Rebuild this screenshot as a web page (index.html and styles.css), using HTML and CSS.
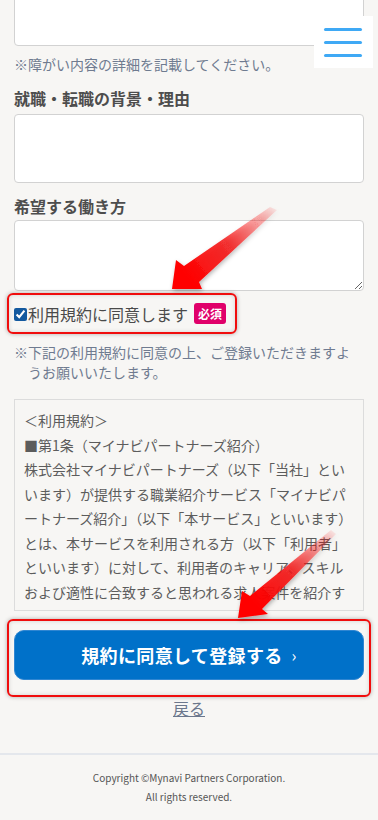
FILE: index.html
```html
<!DOCTYPE html>
<html lang="ja">
<head>
    <meta charset="UTF-8">
    <meta name="viewport" content="width=device-width, initial-scale=1.0">
    <title>エントリーフォーム</title>
    <link rel="stylesheet" href="styles.css">
</head>
<body>
<button type="button" class="menu-button" aria-label="メニュー">
    <span></span><span></span><span></span>
</button>

<main class="form">
    <div class="field field-cut">
        <textarea class="input input-cut"></textarea>
        <p class="note">※障がい内容の詳細を記載してください。</p>
    </div>

    <div class="field">
        <h3 class="field-title">就職・転職の背景・理由</h3>
        <textarea class="input input-reason"></textarea>
    </div>

    <div class="field">
        <h3 class="field-title field-title-tight">希望する働き方</h3>
        <textarea class="input input-style"></textarea>
    </div>

    <label class="agree mark">
        <input type="checkbox" checked>
        <span class="agree-text">利用規約に同意します</span>
        <span class="badge">必須</span>
    </label>

    <p class="note note-hang">※下記の利用規約に同意の上、ご登録いただきますようお願いいたします。</p>

    <div class="terms">
        <p>＜利用規約＞</p>
        <p>■第1条（マイナビパートナーズ紹介）</p>
        <p>株式会社マイナビパートナーズ（以下「当社」といいます）が提供する職業紹介サービス「マイナビパートナーズ紹介」（以下「本サービス」といいます）とは、本サービスを利用される方（以下「利用者」といいます）に対して、利用者のキャリア、スキルおよび適性に合致すると思われる求人案件を紹介するサービスをいいます。</p>
    </div>

    <div class="submit-wrap mark">
        <button type="submit" class="submit">規約に同意して登録する<span class="chevron">&rsaquo;</span></button>
    </div>

    <p class="back-row"><a href="#" class="back">戻る</a></p>
</main>

<footer class="footer">
    <p>Copyright ©Mynavi Partners Corporation.</p>
    <p>All rights reserved.</p>
</footer>

<!-- annotation arrows drawn over the page -->
<svg class="arrows" width="378" height="820" viewBox="0 0 378 820" aria-hidden="true">
    <defs>
        <linearGradient id="arrow1" gradientUnits="userSpaceOnUse" x1="274" y1="208" x2="186" y2="276">
            <stop offset="0" stop-color="#ff1010" stop-opacity="0.08"/>
            <stop offset="0.55" stop-color="#f41414" stop-opacity="0.85"/>
            <stop offset="1" stop-color="#ff0000"/>
        </linearGradient>
        <linearGradient id="arrow2" gradientUnits="userSpaceOnUse" x1="333" y1="532" x2="254" y2="603">
            <stop offset="0" stop-color="#ff1010" stop-opacity="0.08"/>
            <stop offset="0.55" stop-color="#f41414" stop-opacity="0.85"/>
            <stop offset="1" stop-color="#ff0000"/>
        </linearGradient>
        <filter id="shade" x="-20%" y="-20%" width="140%" height="140%">
            <feDropShadow dx="1" dy="2" stdDeviation="2" flood-color="#000" flood-opacity="0.3"/>
        </filter>
    </defs>
    <polygon fill="url(#arrow1)" filter="url(#shade)"
             points="172,289 176,260 184,266 270,207 277,210 199,282 202,289"/>
    <polygon fill="url(#arrow2)" filter="url(#shade)"
             points="238,618 242,591 250,596 331,530 336,534 262,609 268,614"/>
</svg>
</body>
</html>
```

FILE: styles.css
```css
* {
    box-sizing: border-box;
}
body {
    margin: 0;
    background-color: #f7f6f4;
    font-family: "Noto Sans CJK JP", "Noto Sans", sans-serif;
    color: #4a4a4a;
    position: relative;
    overflow: hidden;
}
p, h3 {
    margin: 0;
}
.menu-button {
    position: fixed;
    top: 16px;
    right: 5px;
    width: 59px;
    height: 52px;
    padding: 0 11px 0 10px;
    border: 0;
    background-color: #fff;
    display: flex;
    flex-direction: column;
    justify-content: center;
    gap: 10px;
    z-index: 5;
}
.menu-button span {
    display: block;
    height: 3px;
    border-radius: 2px;
    background-color: #3fa9f5;
}
.form {
    padding: 0 14px;
}
.input {
    display: block;
    width: 100%;
    border: 1px solid #d2d2d2;
    border-radius: 4px;
    background-color: #fff;
    font: inherit;
}
.input-cut {
    margin-top: -30px;
    height: 76px;
    resize: none;
}
.input-reason {
    margin-top: 4px;
    height: 69px;
    resize: none;
}
.input-style {
    margin-top: 2px;
    height: 71px;
}
.note {
    margin-top: 8px;
    font-size: 14px;
    line-height: 20px;
    color: #6f7b90;
}
.note-hang {
    padding: 0 3px 0 1em;
    text-indent: -1em;
}
.field-title {
    margin-top: 12px;
    font-size: 16px;
    line-height: 24px;
    font-weight: bold;
    color: #4d4d4d;
}
.field-title-tight {
    margin-top: 11px;
}
/* red highlight frames */
.mark {
    border: 2px solid #f00d0d;
    border-radius: 6px;
    box-shadow: 0 0 4px rgba(0, 0, 0, 0.3), inset 0 0 4px rgba(0, 0, 0, 0.15);
}
.agree {
    display: flex;
    align-items: center;
    width: fit-content;
    height: 41px;
    margin: 2px 0 0 -7px;
    padding: 0 9px 0 5px;
    cursor: pointer;
}
.agree input {
    width: 13px;
    height: 13px;
    margin: 1px 1px 0 0;
    accent-color: #13599f;
}
.agree-text {
    font-size: 16px;
    line-height: 24px;
    color: #4a4a4a;
}
.badge {
    margin-left: 6px;
    padding: 0 4px;
    height: 21px;
    border-radius: 3px;
    background-color: #e0006a;
    color: #fff;
    font-size: 12px;
    line-height: 21px;
    font-weight: bold;
}
.terms {
    margin-top: 17px;
    height: 212px;
    overflow: hidden;
    border: 1px solid #dcdcdc;
    padding: 8px 9px 0 9px;
    font-size: 14px;
    line-height: 24.5px;
    color: #5c5c5c;
}
.submit-wrap {
    margin: 8px -7px 0;
    padding: 9px 5px 15px;
}
.submit {
    display: flex;
    justify-content: center;
    align-items: center;
    width: 100%;
    height: 50px;
    border: 1px solid #2f86d2;
    border-radius: 10px;
    background-color: #0071c9;
    color: #fff;
    font-family: inherit;
    font-size: 18px;
    font-weight: bold;
    letter-spacing: 0.02em;
}
.chevron {
    margin-left: 9px;
    font-size: 16px;
    font-weight: normal;
}
.back-row {
    margin-top: -1px;
    text-align: center;
    line-height: 24px;
}
.back {
    font-size: 16px;
    color: #6b778c;
}
.footer {
    margin-top: 33px;
    border-top: 2px solid #e4e7ec;
    padding: 13px 0 14px;
    text-align: center;
    font-size: 10px;
    line-height: 19px;
    color: #555;
}
.arrows {
    position: absolute;
    left: 0;
    top: 0;
    pointer-events: none;
    z-index: 4;
}
```
